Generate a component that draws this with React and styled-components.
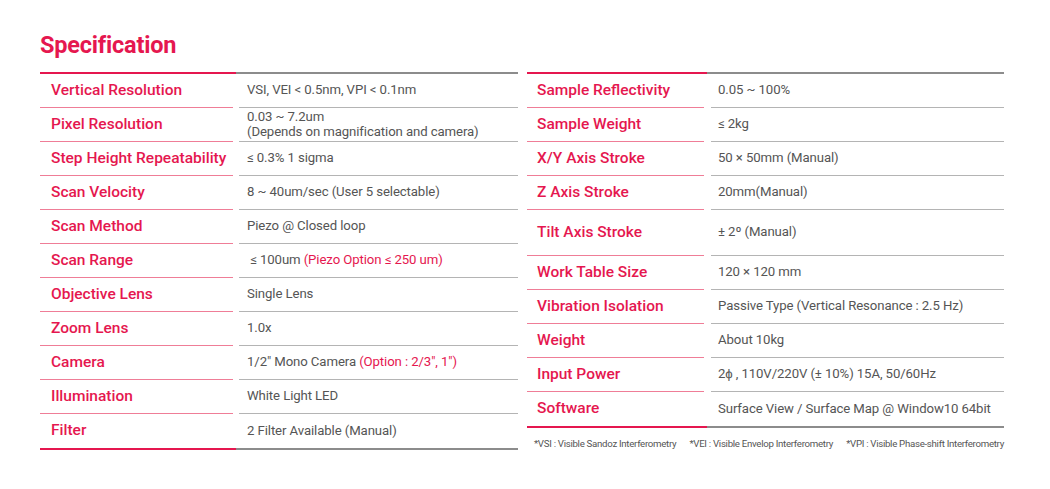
import React from "react";
import styled, { createGlobalStyle } from "styled-components";

const RED = "#e5174f";
const PINK = "#ef7d97";
const GRAY_RULE = "#8c8c8c";
const GRAY_LINE = "#b4b4b4";
const TEXT = "#555";

const GlobalStyle = createGlobalStyle`
  body {
    margin: 0;
    background: #fff;
    font-family: Roboto, "Liberation Sans", sans-serif;
  }
`;

const Page = styled.section`
  padding: 31px 0 0 40px;
  width: 964px;
`;

const Title = styled.h2`
  margin: 0 0 13px;
  color: ${RED};
  font-size: 23.5px;
  line-height: 28px;
  font-weight: 700;
  letter-spacing: -0.2px;
`;

const Columns = styled.div`
  display: flex;
  align-items: flex-start;
  gap: 9px;
`;

const Table = styled.div`
  width: ${(p) => p.$width}px;
  display: flex;
  flex-direction: column;
`;

const Rule = styled.div`
  height: 2px;
  background: linear-gradient(
    to right,
    ${RED} 0,
    ${RED} ${(p) => p.$split}px,
    ${GRAY_RULE} ${(p) => p.$split}px,
    ${GRAY_RULE} 100%
  );
`;

const Row = styled.div`
  display: grid;
  grid-template-columns: ${(p) => p.$label}px 1fr;
  column-gap: ${(p) => p.$gap}px;
  min-height: ${(p) => (p.$tall ? 46 : 34)}px;
`;

const Cell = styled.div`
  display: flex;
  align-items: center;
  border-bottom: ${(p) => (p.$last ? "none" : `1px solid ${p.$line}`)};
  padding: 0 0 2px ${(p) => p.$pad}px;
`;

const Label = styled(Cell)`
  color: ${RED};
  font-size: 15.5px;
  font-weight: 500;
`;

const Value = styled(Cell)`
  color: ${TEXT};
  font-size: 13.2px;
  line-height: 15px;
  letter-spacing: -0.1px;
`;

const Accent = styled.span`
  color: ${RED};
`;

const Notes = styled.div`
  margin-top: 10px;
  padding-left: 7px;
  display: flex;
  justify-content: space-between;
  white-space: nowrap;
  color: ${TEXT};
  font-size: 9.7px;
  line-height: 12px;
  letter-spacing: -0.3px;
`;

const leftRows = [
  ["Vertical Resolution", "VSI, VEI < 0.5nm, VPI < 0.1nm"],
  [
    "Pixel Resolution",
    <>
      0.03 ~ 7.2um
      <br />
      (Depends on magnification and camera)
    </>,
  ],
  ["Step Height Repeatability", "≤ 0.3% 1 sigma"],
  ["Scan Velocity", "8 ~ 40um/sec (User 5 selectable)"],
  ["Scan Method", "Piezo @ Closed loop"],
  [
    "Scan Range",
    <>
      {"\u00a0≤ 100um "}
      <Accent>(Piezo Option ≤ 250 um)</Accent>
    </>,
  ],
  ["Objective Lens", "Single Lens"],
  ["Zoom Lens", "1.0x"],
  [
    "Camera",
    <>
      1/2" Mono Camera <Accent>(Option : 2/3", 1")</Accent>
    </>,
  ],
  ["Illumination", "White Light LED"],
  ["Filter", "2 Filter Available (Manual)"],
];

const rightRows = [
  ["Sample Reflectivity", "0.05 ~ 100%"],
  ["Sample Weight", "≤ 2kg"],
  ["X/Y Axis Stroke", "50 × 50mm (Manual)"],
  ["Z Axis Stroke", "20mm(Manual)"],
  ["Tilt Axis Stroke", "± 2º (Manual)", true],
  ["Work Table Size", "120 × 120 mm"],
  ["Vibration Isolation", "Passive Type (Vertical Resonance : 2.5 Hz)"],
  ["Weight", "About 10kg"],
  ["Input Power", "2ϕ , 110V/220V (± 10%) 15A, 50/60Hz"],
  ["Software", "Surface View / Surface Map @ Window10 64bit"],
];

const SpecTable = ({ rows, width, label, gap, split, labelPad, valuePad }) => (
  <Table $width={width}>
    <Rule $split={split} />
    {rows.map(([name, value, tall], i) => {
      const last = i === rows.length - 1;
      return (
        <Row key={i} $label={label} $gap={gap} $tall={tall}>
          <Label $line={PINK} $last={last} $pad={labelPad}>
            {name}
          </Label>
          <Value $line={GRAY_LINE} $last={last} $pad={valuePad}>
            <span>{value}</span>
          </Value>
        </Row>
      );
    })}
    <Rule $split={split} />
  </Table>
);

export default function App() {
  return (
    <>
      <GlobalStyle />
      <Page>
        <Title>Specification</Title>
        <Columns>
          <SpecTable
            rows={leftRows}
            width={478}
            label={193}
            gap={6}
            split={196}
            labelPad={11}
            valuePad={8}
          />
          <Table $width={477}>
            <SpecTable
              rows={rightRows}
              width={477}
              label={177}
              gap={7}
              split={180}
              labelPad={10}
              valuePad={7}
            />
            <Notes>
              <span>*VSI : Visible Sandoz Interferometry</span>
              <span>*VEI : Visible Envelop Interferometry</span>
              <span>*VPI : Visible Phase-shift Interferometry</span>
            </Notes>
          </Table>
        </Columns>
      </Page>
    </>
  );
}
